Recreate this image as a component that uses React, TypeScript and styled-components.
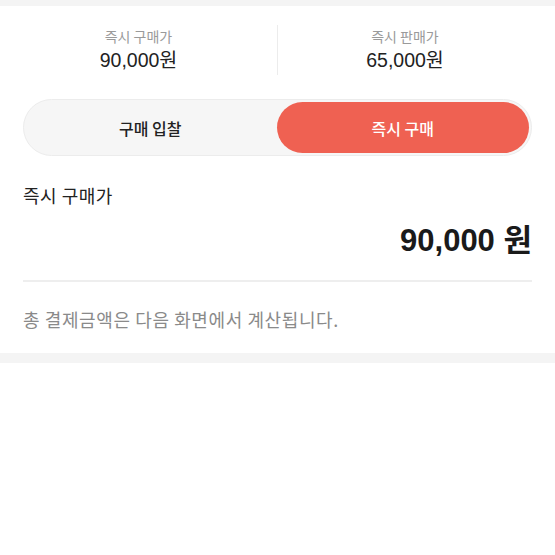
import React, { useState } from 'react';
import styled, { createGlobalStyle } from 'styled-components';

const GlobalStyle = createGlobalStyle`
  body {
    margin: 0;
    background: #ffffff;
    font-family: 'Noto Sans CJK KR', 'Noto Sans', sans-serif;
  }
`;

const Band = styled.div<{ h: number }>`
  height: ${({ h }) => h}px;
  background: #f4f4f4;
`;

const Panel = styled.div`
  background: #fff;
  padding: 5px 23px 0 23px;
  height: 347px;
  box-sizing: border-box;
`;

const Stats = styled.div`
  display: grid;
  grid-template-columns: 277px 1px 1fr;
  align-items: center;
  height: 78px;
  margin-left: -23px;
`;

const Stat = styled.div`
  display: flex;
  flex-direction: column;
  align-items: center;
  line-height: 1.2;
`;

const StatLabel = styled.span`
  font-size: 14px;
  color: #9a9a9a;
`;

const StatValue = styled.span`
  font-family: 'Liberation Sans', 'Noto Sans CJK KR', sans-serif;
  font-size: 19.5px;
  color: #222;
  margin-top: 4px;
`;

const VDivider = styled.div`
  width: 1px;
  height: 50px;
  background: #ececec;
`;

const Toggle = styled.div`
  display: grid;
  grid-template-columns: 1fr 1fr;
  margin-top: 10px;
  height: 57px;
  border-radius: 29px;
  background: #f6f6f6;
  border: 1px solid #ececec;
  box-sizing: border-box;
  padding: 2px 2px 2px 0;
`;

const ToggleButton = styled.button<{ active: boolean }>`
  border: none;
  border-radius: 26px;
  font-family: 'Noto Sans CJK KR', sans-serif;
  font-size: 16px;
  font-weight: 500;
  cursor: pointer;
  background: ${({ active }) => (active ? '#ef6152' : 'transparent')};
  color: ${({ active }) => (active ? '#fff' : '#222')};
`;

const SectionTitle = styled.div`
  margin-top: 27px;
  font-size: 18px;
  line-height: 25px;
  letter-spacing: 0.5px;
  color: #222;
`;

const Price = styled.div`
  margin-top: 15px;
  text-align: right;
  font-family: 'Liberation Sans', 'Noto Sans CJK KR', sans-serif;
  font-size: 31px;
  line-height: 36px;
  font-weight: 700;
  color: #1a1a1a;
`;

const HDivider = styled.div`
  height: 2px;
  background: #eeeeee;
  margin-top: 21px;
`;

const Note = styled.div`
  margin-top: 25px;
  font-size: 18px;
  line-height: 25px;
  letter-spacing: 0.6px;
  color: #8a8a8a;
`;

export default function App() {
  const [mode, setMode] = useState<'bid' | 'now'>('now');
  return (
    <>
      <GlobalStyle />
      <Band h={6} />
      <Panel>
        <Stats>
          <Stat>
            <StatLabel>즉시 구매가</StatLabel>
            <StatValue>90,000원</StatValue>
          </Stat>
          <VDivider />
          <Stat>
            <StatLabel>즉시 판매가</StatLabel>
            <StatValue>65,000원</StatValue>
          </Stat>
        </Stats>
        <Toggle>
          <ToggleButton active={mode === 'bid'} onClick={() => setMode('bid')}>
            구매 입찰
          </ToggleButton>
          <ToggleButton active={mode === 'now'} onClick={() => setMode('now')}>
            즉시 구매
          </ToggleButton>
        </Toggle>
        <SectionTitle>즉시 구매가</SectionTitle>
        <Price>90,000 원</Price>
        <HDivider />
        <Note>총 결제금액은 다음 화면에서 계산됩니다.</Note>
      </Panel>
      <Band h={10} />
    </>
  );
}
